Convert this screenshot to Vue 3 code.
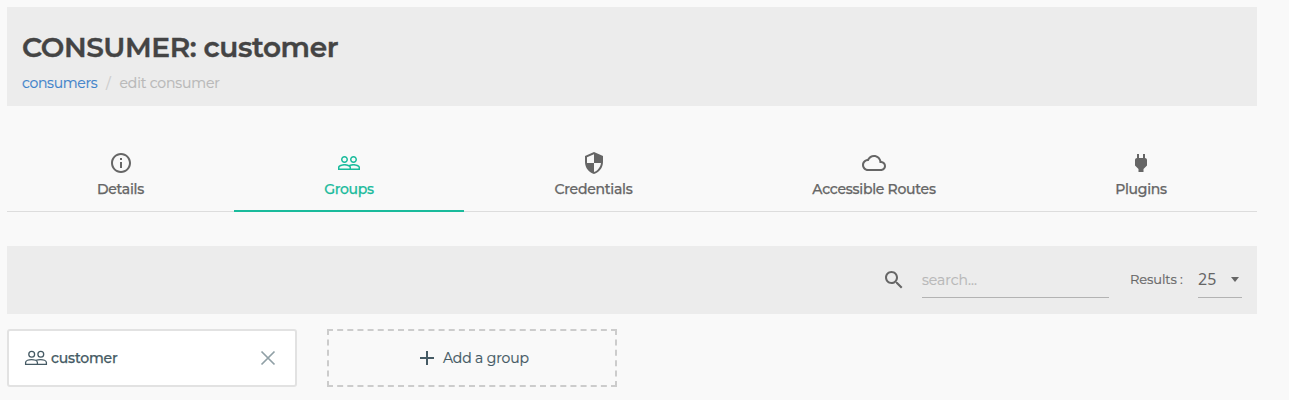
<script setup>
const tabs = [
  { name: 'Details', cls: 'details', d: 'M11 17h2v-6h-2v6zm1-15C6.48 2 2 6.48 2 12s4.48 10 10 10 10-4.48 10-10S17.52 2 12 2zm0 18c-4.41 0-8-3.59-8-8s3.59-8 8-8 8 3.59 8 8-3.59 8-8 8zM11 9h2V7h-2v2z' },
  { name: 'Groups', cls: 'groups', active: true, d: 'M16.5 13c-1.2 0-3.07.34-4.5 1-1.43-.67-3.3-1-4.5-1C5.33 13 1 14.08 1 16.25V19h22v-2.75c0-2.17-4.33-3.25-6.5-3.25zm-4 4.5h-10v-1.25c0-.54 2.56-1.75 5-1.75s5 1.21 5 1.75v1.25zm9 0H14v-1.25c0-.46-.2-.86-.52-1.22.88-.3 1.96-.53 3.02-.53 2.44 0 5 1.21 5 1.75v1.25zM7.5 12c1.93 0 3.5-1.57 3.5-3.5S9.43 5 7.5 5 4 6.57 4 8.5 5.57 12 7.5 12zm0-5.5c1.1 0 2 .9 2 2s-.9 2-2 2-2-.9-2-2 .9-2 2-2zm9 5.5c1.93 0 3.5-1.57 3.5-3.5S18.43 5 16.5 5 13 6.57 13 8.5s1.57 3.5 3.5 3.5zm0-5.5c1.1 0 2 .9 2 2s-.9 2-2 2-2-.9-2-2 .9-2 2-2z' },
  { name: 'Credentials', cls: 'credentials', d: 'M12 1L3 5v6c0 5.55 3.84 10.74 9 12 5.16-1.26 9-6.45 9-12V5l-9-4zm0 10.99h7c-.53 4.12-3.28 7.79-7 8.94V12H5V6.3l7-3.11v8.8z' },
  { name: 'Accessible Routes', cls: 'routes', d: 'M19.35 10.04C18.67 6.59 15.64 4 12 4 9.11 4 6.6 5.64 5.35 8.04 2.34 8.36 0 10.91 0 14c0 3.31 2.69 6 6 6h13c2.76 0 5-2.24 5-5 0-2.64-2.05-4.78-4.65-4.96zM19 18H6c-2.21 0-4-1.79-4-4s1.79-4 4-4h.71C7.37 7.69 9.48 6 12 6c3.04 0 5.5 2.46 5.5 5.5v.5H19c1.66 0 3 1.34 3 3s-1.34 3-3 3z' },
  { name: 'Plugins', cls: 'plugins', d: 'M16.01 7L16 3h-2v4h-4V3H8v4h-.01C7 6.99 6 7.99 6 8.99v5.49L9.5 18v3h5v-3l3.5-3.51v-5.5c0-1-1-2-1.99-1.99z' },
]
</script>

<template>
  <main>
    <header class="head">
      <h1><span>CONSUMER: customer</span></h1>
      <nav class="crumbs">
        <a>consumers</a><i>/</i><span>edit consumer</span>
      </nav>
    </header>

    <div class="tabs">
      <div v-for="t in tabs" :key="t.name" class="tab" :class="[t.cls, { active: t.active }]">
        <svg viewBox="0 0 24 24"><path :d="t.d" /></svg>
        <span>{{ t.name }}</span>
      </div>
    </div>

    <section class="toolbar">
      <svg class="search-icon" viewBox="0 0 24 24"><path d="M15.5 14h-.79l-.28-.27C15.41 12.59 16 11.11 16 9.5 16 5.91 13.09 3 9.5 3S3 5.91 3 9.5 5.91 16 9.5 16c1.61 0 3.09-.59 4.23-1.57l.27.28v.79l5 4.99L20.49 19l-4.99-5zm-6 0C7.01 14 5 11.99 5 9.5S7.01 5 9.5 5 14 7.01 14 9.5 11.99 14 9.5 14z" /></svg>
      <div class="search"><span>search...</span></div>
      <span class="results">Results :</span>
      <div class="select"><span>25</span><b></b></div>
    </section>

    <div class="cards">
      <div class="card">
        <svg class="people" viewBox="0 0 24 24">
          <circle cx="7.7" cy="8.3" r="2.9" /><circle cx="16.8" cy="8.3" r="2.9" />
          <path d="M1.6 18.3v-1.7c0-1.9 3.2-3 5.9-3s5.9 1.1 5.9 3v1.7zM12 14.3c1.3-.5 3-.7 4.5-.7 2.7 0 5.9 1.1 5.9 3v1.7h-9" />
        </svg>
        <span class="name">customer</span>
        <svg class="close" viewBox="0 0 24 24"><path d="M5.5 5.5l13 13M18.5 5.5l-13 13" /></svg>
      </div>
      <div class="add">
        <svg viewBox="0 0 24 24"><path d="M12 5v14M5 12h14" /></svg>
        <span>Add a group</span>
      </div>
    </div>
  </main>
</template>

<style>
body { background: #f9f9f9; }
</style>

<style scoped>
* { box-sizing: border-box; }
main {
  width: 1257px;
  height: 400px;
  padding: 7px 0 0 7px;
  overflow: hidden;
  background: #f9f9f9;
  color: #666;
  font-family: Montserrat, Inter, sans-serif;
  font-size: 14px;
}
svg { display: block; width: 24px; height: 24px; fill: currentColor; flex: none; }
.head { height: 99px; padding: 22px 15px 0; background: #ececec; }
h1 { margin: 0; font-size: 28px; line-height: 36px; font-weight: 600; letter-spacing: -0.42px; color: #444; white-space: nowrap; -webkit-text-stroke: 0.4px currentColor; }
.crumbs { display: flex; margin-top: 8px; line-height: 20px; letter-spacing: -0.15px; color: #b8b8b8; white-space: nowrap; -webkit-text-stroke: 0.2px currentColor; }
.crumbs a { width: 84px; color: #3f83ca; letter-spacing: -0.3px; }
.crumbs i { width: 13.5px; font-style: normal; color: #ccc; }
.tabs {
  display: grid;
  grid-template-columns: 227px 230px 259px 302px 232px;
  height: 72px;
  margin-top: 34px;
  border-bottom: 1px solid #ddd;
}
.tab { display: flex; flex-direction: column; align-items: center; height: 72px; padding-top: 11px; border-bottom: 2px solid transparent; }
.tab span { margin-top: 4px; line-height: 20px; font-weight: 500; letter-spacing: -0.27px; white-space: nowrap; -webkit-text-stroke: 0.25px currentColor; }
.tab.active { color: #1abb9c; border-color: #1abb9c; }
.toolbar { display: flex; height: 68px; margin-top: 34px; padding: 0 15px 0 875px; background: #ececec; }
.search-icon { margin-top: 22px; }
.search { width: 187px; height: 52px; margin-left: 16px; padding-top: 24px; border-bottom: 1px solid #b3b3b3; line-height: 20px; color: #b8b8b8; -webkit-text-stroke: 0.2px currentColor; }
.results { margin: 23px 0 0 21px; width: 68px; font-size: 13px; line-height: 20px; letter-spacing: -0.1px; white-space: nowrap; -webkit-text-stroke: 0.2px currentColor; }
.select { display: flex; justify-content: space-between; width: 44px; height: 52px; padding: 23px 3px 0 0; border-bottom: 1px solid #b3b3b3; font: 16px/20px "Noto Sans", sans-serif; }
.select b { margin-top: 8px; height: 0; border: 4px solid transparent; border-top: 5px solid #666; border-bottom: 0; }
.cards { display: flex; gap: 30px; margin-top: 15px; color: #455a64; }
.card, .add { display: flex; align-items: center; width: 290px; height: 58px; white-space: nowrap; }
.card { padding: 0 15px 0 15px; border: 2px solid #e2e2e2; border-radius: 3px; background: #fff; }
.people { fill: none; stroke: currentColor; stroke-width: 1.3; }
.name { margin-left: 3px; font-weight: 500; letter-spacing: -0.2px; -webkit-text-stroke: 0.25px currentColor; }
.close { margin-left: auto; fill: none; stroke: #90a0a6; stroke-width: 1.7; }
.add { border: 2px dashed #ccc; padding-left: 86px; }
.add svg { fill: none; stroke: currentColor; stroke-width: 2; }
.add span { margin-left: 4px; letter-spacing: -0.13px; -webkit-text-stroke: 0.2px currentColor; }
</style>
